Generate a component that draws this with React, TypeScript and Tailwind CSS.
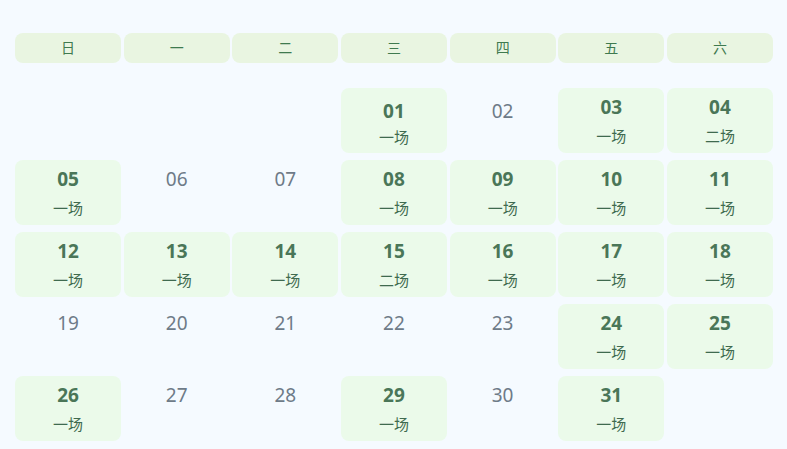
import React from "react";

const heads = ["日", "一", "二", "三", "四", "五", "六"];
const events: Record<number, string> = {
  1: "一场", 3: "一场", 4: "二场", 5: "一场", 8: "一场", 9: "一场", 10: "一场", 11: "一场",
  12: "一场", 13: "一场", 14: "一场", 15: "二场", 16: "一场", 17: "一场", 18: "一场",
  24: "一场", 25: "一场", 26: "一场", 29: "一场", 31: "一场",
};

export default function App() {
  const cells: (number | null)[] = [null, null, null];
  for (let d = 1; d <= 31; d++) cells.push(d);
  return (
    <div
      className="w-[787px] h-[449px] bg-[#f5faff] pt-[33px] pl-[15px] pr-[14px]"
      style={{ fontFamily: '"Noto Sans", "Noto Sans CJK SC", sans-serif' }}
    >
      <div className="grid grid-cols-7 gap-x-[2.5px]">
        {heads.map((h) => (
          <div
            key={h}
            className="h-[29.5px] rounded-[8px] bg-[#e9f5e1] flex items-center justify-center text-[14px] text-[#3f7a4f]"
          >
            {h}
          </div>
        ))}
      </div>
      <div className="grid grid-cols-7 gap-x-[2.5px] gap-y-[7.5px] mt-[25.5px]">
        {cells.map((d, i) => {
          if (d === null) return <div key={i} className="h-[64.5px]" />;
          const ev = events[d];
          const label = d < 10 ? "0" + d : String(d);
          const low = d === 1 || d === 2;
          return (
            <div
              key={i}
              className={
                "h-[64.5px] rounded-[8px] flex flex-col items-center " +
                (low ? "pt-[10.5px] " : "pt-[6.5px] ") +
                (ev ? "bg-[#ebfaea]" : "")
              }
            >
              <div
                className={
                  "text-[19px] leading-[24px] " +
                  (ev ? "font-bold text-[#4a7658]" : "text-[#6e7b88]")
                }
              >
                {label}
              </div>
              {ev && (
                <div
                  className={
                    "text-[15px] leading-[20px] text-[#3f6a4f] " + (low ? "mt-[4px]" : "mt-[7px]")
                  }
                >
                  {ev}
                </div>
              )}
            </div>
          );
        })}
      </div>
    </div>
  );
}
